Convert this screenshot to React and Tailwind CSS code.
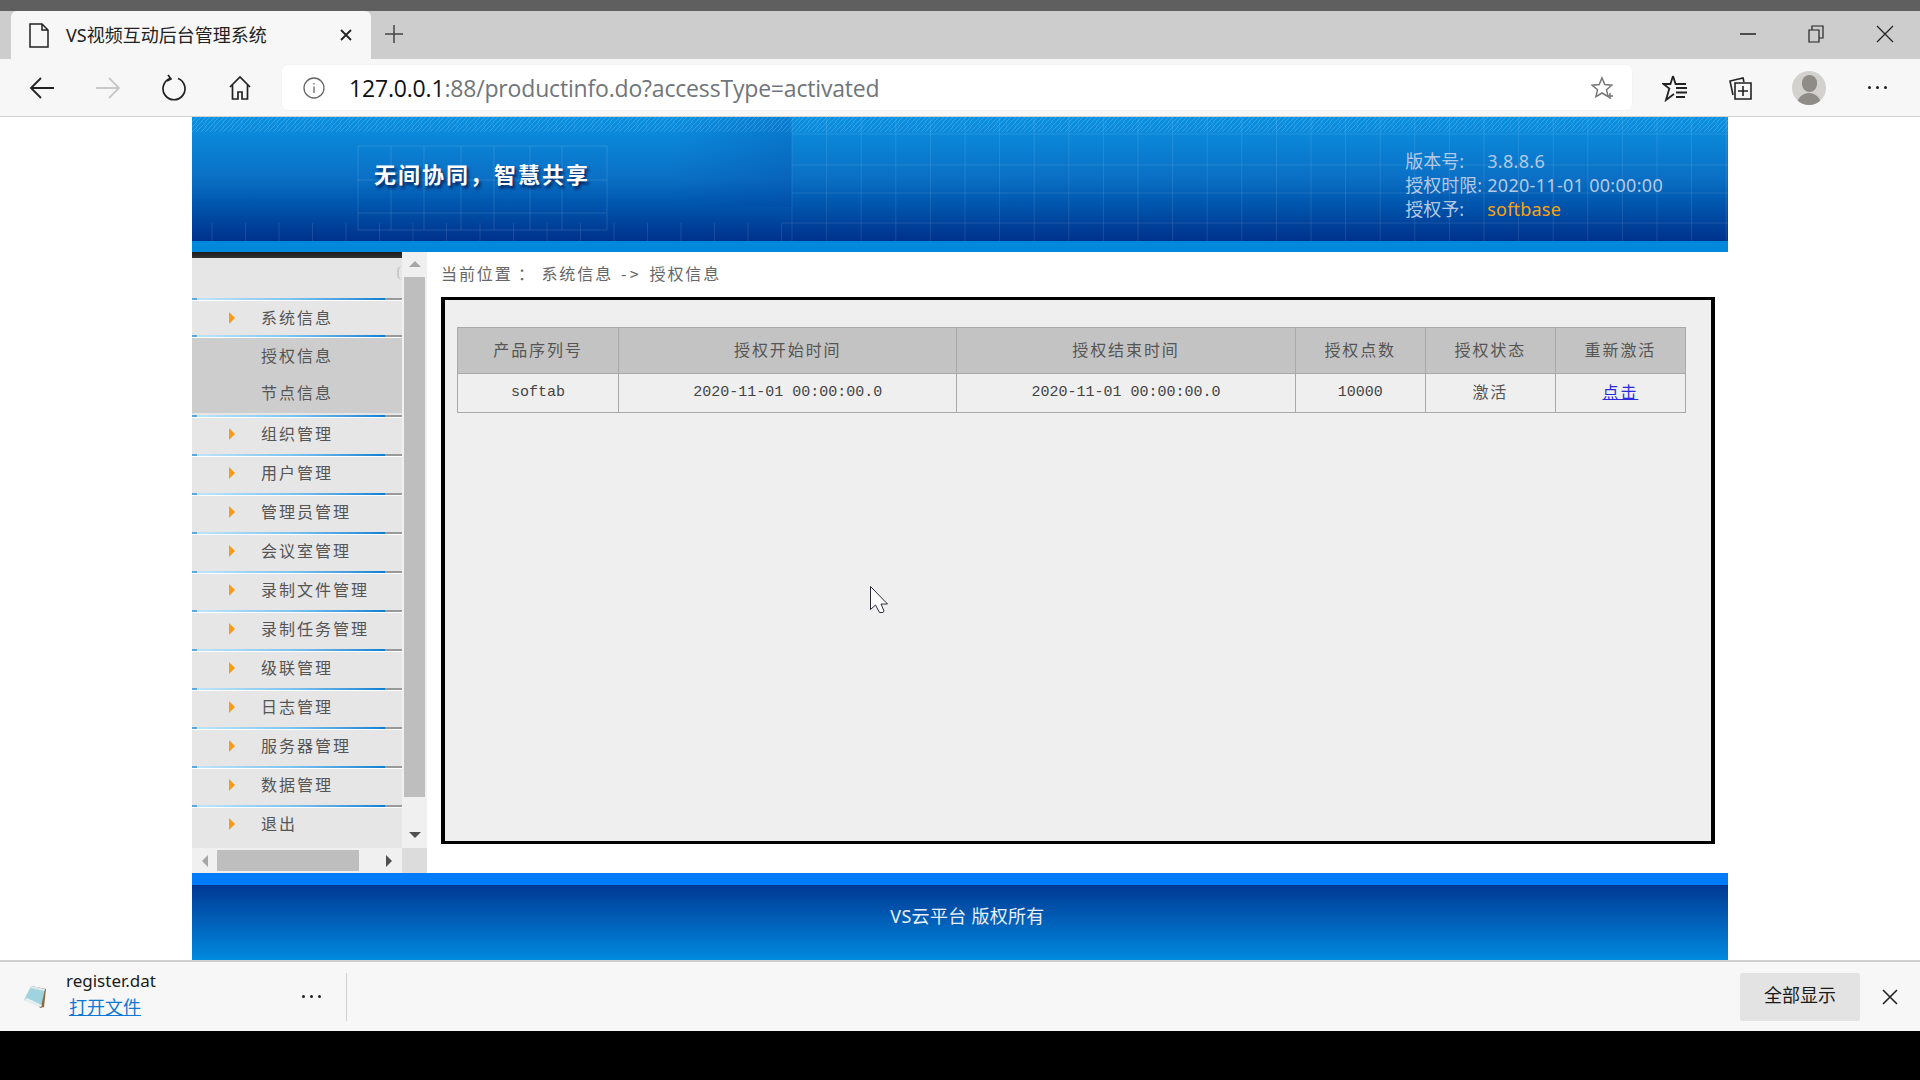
import React from 'react';

const serif = "font-['Noto_Sans_CJK_SC','Noto_Sans',sans-serif]";

const menuRows = ['组织管理', '用户管理', '管理员管理', '会议室管理', '录制文件管理', '录制任务管理', '级联管理', '日志管理', '服务器管理', '数据管理', '退出'];

const Svg = ({ w = 24, h = 24, stroke = '#222', width = 1.5, children }) => (
  <svg width={w} height={h} viewBox={`0 0 ${w} ${h}`} fill="none" stroke={stroke} strokeWidth={width}>
    {children}
  </svg>
);

// browser top strip with tab and window buttons
const TabStrip = () => (
  <div className="h-[48px] bg-[#cdcdcd] flex items-stretch pl-[11px]">
    <div className="w-[360px] bg-[#f7f7f7] rounded-t-[6px] flex items-center pl-[18px]">
      <Svg w={20} h={25}>
        <path d="M1 1h12l6 6v17H1z M13 1v6h6" />
      </Svg>
      <span className="ml-[17px] text-[18px] text-[#222] whitespace-nowrap font-['Noto_Sans','Noto_Sans_CJK_SC',sans-serif]">VS视频互动后台管理系统</span>
      <div className="ml-auto mr-[18px]">
        <Svg w={14} h={14} width={1.8}>
          <path d="M2 2l10 10M12 2L2 12" />
        </Svg>
      </div>
    </div>
    <div className="ml-[13px] flex items-center pb-[2px]">
      <Svg w={20} h={20} stroke="#444">
        <path d="M10 1v18M1 10h18" />
      </Svg>
    </div>
    <div className="ml-auto flex pb-[2px]">
      <div className="w-[68px] flex items-center justify-center">
        <Svg w={16} h={4}>
          <path d="M0 2h16" />
        </Svg>
      </div>
      <div className="w-[68px] flex items-center justify-center">
        <Svg w={16} h={18} width={1.2}>
          <path d="M1 5h10v12H1z M4 5V1h11v12h-4" />
        </Svg>
      </div>
      <div className="w-[70px] flex items-center justify-center">
        <Svg w={18} h={18} width={1.2}>
          <path d="M1 1l16 16M17 1L1 17" />
        </Svg>
      </div>
    </div>
  </div>
);

const ToolButton = ({ children }) => (
  <div className="w-[66px] h-full flex items-center justify-center shrink-0">{children}</div>
);

const Toolbar = () => (
  <div className="h-[58px] bg-[#f7f7f7] border-b border-[#d2d2d2] flex items-center pl-[9px]">
    <ToolButton>
      <Svg w={26} h={24} width={1.8}>
        <path d="M25 12H2M12 2L2 12l10 10" />
      </Svg>
    </ToolButton>
    <ToolButton>
      <Svg w={26} h={24} stroke="#c8c8c8" width={1.8}>
        <path d="M1 12h23M14 2l10 10-10 10" />
      </Svg>
    </ToolButton>
    <ToolButton>
      <Svg w={26} h={28} stroke="#222" width={1.7}>
        <path d="M9 4.500a11 11 0 1 0 8 0M7 1l3 4-4 2" />
      </Svg>
    </ToolButton>
    <ToolButton>
      <Svg w={24} h={26} width={1.7}>
        <path d="M2 12L12 2l10 10M4.500 10v14h5.500v-7h4v7h5.500V10" />
      </Svg>
    </ToolButton>
    <div className="w-[1350px] ml-[9px] h-[45px] bg-white rounded-[6px] flex items-center shrink-0 shadow-[0_0_2px_rgba(0,0,0,0.06)]">
      <div className="ml-[21px]">
        <Svg w={22} h={22} stroke="#666" width={1.3}>
          <circle cx="11" cy="11" r="10" />
          <path d="M11 9.500V16M11 6v1.500" />
        </Svg>
      </div>
      <div className="ml-[24px] pt-[1px] text-[23px] tracking-[-0.18px] text-[#70757a] whitespace-nowrap font-['Open_Sans','Noto_Sans',sans-serif]">
        <span className="text-[#111]">127.0.0.1</span>:88/productinfo.do?accessType=activated
      </div>
      <div className="ml-auto mr-[17px]">
        <Svg w={24} h={24} stroke="#777" width={1.5}>
          <path d="M11 2l2.800 6.600 7 .6-5.300 4.600 1.600 6.900L11 17l-6.100 3.700 1.600-6.900L1.200 9.200l7-.6z" />
          <path d="M19 17v6M16 20h6" />
        </Svg>
      </div>
    </div>
    <div className="w-[10px] shrink-0" />
    <ToolButton>
      <Svg w={26} h={28} width={1.8}>
        <path d="M11 2l2.600 8H24M11 2L8.400 10H1.500l5.800 4.600L4 26l8-6" />
        <path d="M14 14h11M14 18.500h11M14 23h9" />
      </Svg>
    </ToolButton>
    <ToolButton>
      <Svg w={26} h={26} width={1.6}>
        <path d="M5 20L2 6l13-3 1 4" />
        <path d="M7 8h16v16H7z M15 11v10M10 16h10" />
      </Svg>
    </ToolButton>
    <div className="w-[70px] h-full flex items-center justify-center shrink-0">
      <div className="w-[34px] h-[34px] rounded-full bg-[#d2d1cd] flex flex-col items-center justify-end overflow-hidden">
        <div className="w-[15px] h-[17px] rounded-full bg-[#8f8b87] mb-[1px]" />
        <div className="w-[24px] h-[12px] rounded-t-full bg-[#8f8b87]" />
      </div>
    </div>
    <div className="w-[67px] h-full flex items-center justify-center shrink-0">
      <div className="flex gap-[5px]">
        <div className="w-[3px] h-[3px] rounded-full bg-[#222]" />
        <div className="w-[3px] h-[3px] rounded-full bg-[#222]" />
        <div className="w-[3px] h-[3px] rounded-full bg-[#222]" />
      </div>
    </div>
  </div>
);

// banner artwork: dotted top band and faint grid lines
const BannerArt = () => {
  const rightV = [];
  for (let x = 600; x < 1536; x += 34.6) rightV.push(x);
  const bottomV = [];
  for (let x = 20; x < 600; x += 33.5) bottomV.push(x);
  const boxV = [166, 199, 232, 269, 302, 338, 370, 415];
  return (
    <svg className="absolute left-0 top-0" width="1536" height="124" viewBox="0 0 1536 124">
      <defs>
        <pattern id="dots" width="9" height="5" patternUnits="userSpaceOnUse">
          <path d="M0 5L5 0M4 5L9 0" stroke="#ffffff" strokeOpacity="0.16" strokeWidth="1" />
        </pattern>
        <linearGradient id="dark" x1="0" y1="0" x2="1" y2="0">
          <stop offset="0" stopColor="#003a9a" stopOpacity="0" />
          <stop offset="1" stopColor="#003a9a" stopOpacity="0.22" />
        </linearGradient>
      </defs>
      <rect x="480" y="0" width="120" height="90" fill="url(#dark)" />
      <rect x="0" y="0" width="1536" height="15" fill="url(#dots)" />
      <g stroke="#ffffff" strokeOpacity="0.1">
        {rightV.map((x) => (
          <path key={x} d={`M${x} 0V124`} />
        ))}
        <path d="M600 17H1536M600 48H1536M600 76H1536M590 106H1536" />
      </g>
      <g stroke="#ffffff" strokeOpacity="0.1">
        {bottomV.map((x) => (
          <path key={x} d={`M${x} 106V124`} />
        ))}
      </g>
      <g stroke="#ffffff" strokeOpacity="0.12">
        {boxV.map((x) => (
          <path key={x} d={`M${x} 29V113`} />
        ))}
        <path d="M166 29H415M166 63H415M166 96H415M166 113H415" />
      </g>
    </svg>
  );
};

const Banner = () => (
  <div className="h-[135px] shrink-0 flex flex-col">
    <div className="relative h-[124px] bg-gradient-to-b from-[#0c92e2] via-[#0a6fc4] to-[#00318c]">
      <BannerArt />
      <div className="relative flex h-full">
        <div className="ml-[182px] mt-[41px] h-[30px] text-[22px] leading-[30px] font-bold tracking-[2px] text-white whitespace-nowrap font-['Noto_Sans_CJK_SC',sans-serif] [text-shadow:2px_3px_3px_rgba(0,20,70,0.8)]">
          无间协同，智慧共享
        </div>
        <div className="ml-auto mr-[65px] mt-[32px] text-[18px] leading-[24px] text-[#b3c9e6] font-['Noto_Sans','Noto_Sans_CJK_SC',sans-serif]">
          <div className="flex">
            <span className="w-[82px]">版本号:</span>
            <span className="tracking-[0.3px]">3.8.8.6</span>
          </div>
          <div className="flex">
            <span className="w-[82px]">授权时限:</span>
            <span className="tracking-[0.3px]">2020-11-01 00:00:00</span>
          </div>
          <div className="flex">
            <span className="w-[82px]">授权予:</span>
            <span className="tracking-[0.2px] text-[#fba30c]">softbase</span>
          </div>
        </div>
      </div>
    </div>
    <div className="h-[11px] bg-[#0088da]" />
  </div>
);

const Divider = () => (
  <div className="shrink-0">
    <div className="h-[2px] flex">
      <div className="w-[5px] bg-[#5aa9de]" />
      <div className="w-[188px] bg-gradient-to-r from-[#bfe4fb] via-[#7cc4ef] to-[#0580d2]" />
      <div className="flex-1 bg-[#999999]" />
    </div>
    <div className="h-[1px] bg-white" />
  </div>
);

const MenuText = ({ children, arrow }) => (
  <div className="h-full flex items-center text-[16px] tracking-[2px] text-[#555] pl-[37px] whitespace-nowrap">
    <div className="w-[32px] shrink-0">
      {arrow && <div className="w-0 h-0 border-y-[6.5px] border-y-transparent border-l-[6px] border-l-[#ff9a0a]" />}
    </div>
    <span className="pb-[3px]">{children}</span>
  </div>
);

const Sidebar = () => (
  <div className={`w-[235px] shrink-0 flex flex-col ${serif}`}>
    <div className="flex-1 flex min-h-0">
      <div className="w-[210px] bg-[#e6e6e6] flex flex-col">
        <div className="h-[6px] shrink-0 bg-gradient-to-b from-[#1c1c1c] to-[#333333]" />
        <div className="h-[40px] shrink-0 flex justify-end pt-[8px]">
          <div className="w-[5px] h-[14px] border-l-2 border-[#c8c8c8] rounded-l-full" />
        </div>
        <Divider />
        <div className="h-[34px] shrink-0">
          <MenuText arrow>系统信息</MenuText>
        </div>
        <Divider />
        <div className="h-[75px] shrink-0 bg-[#cdcdcd] flex flex-col pb-[1px]">
          <div className="flex-1">
            <MenuText>授权信息</MenuText>
          </div>
          <div className="flex-1">
            <MenuText>节点信息</MenuText>
          </div>
        </div>
        <div className="h-[2px] shrink-0" />
        {menuRows.map((label, i) => (
          <React.Fragment key={label}>
            <Divider />
            <div className={`shrink-0 h-[36px] pb-[4px] ${i === menuRows.length - 1 ? 'mb-[4px]' : ''}`}>
              <MenuText arrow>{label}</MenuText>
            </div>
          </React.Fragment>
        ))}
      </div>
      {/* vertical scrollbar */}
      <div className="w-[25px] bg-[#f0f0f0] flex flex-col items-center">
        <div className="h-[25px] flex items-center justify-center pb-[2px]">
          <div className="w-0 h-0 border-x-[6px] border-x-transparent border-b-[6px] border-b-[#a6a6a6]" />
        </div>
        <div className="w-[21px] h-[520px] bg-[#bebebe]" />
        <div className="flex-1 flex items-center justify-center pt-[25px]">
          <div className="w-0 h-0 border-x-[6px] border-x-transparent border-t-[6px] border-t-[#505050]" />
        </div>
      </div>
    </div>
    {/* horizontal scrollbar */}
    <div className="h-[25px] shrink-0 flex">
      <div className="w-[210px] bg-[#f0f0f0] flex items-center">
        <div className="w-[25px] flex justify-center">
          <div className="w-0 h-0 border-y-[6px] border-y-transparent border-r-[6px] border-r-[#a6a6a6]" />
        </div>
        <div className="w-[142px] h-[21px] bg-[#bebebe]" />
        <div className="flex-1 flex justify-center pl-[17px]">
          <div className="w-0 h-0 border-y-[6px] border-y-transparent border-l-[6px] border-l-[#505050]" />
        </div>
      </div>
      <div className="flex-1 bg-[#dcdcdc]" />
    </div>
  </div>
);

const th = 'border border-[#a9a9a9] font-normal pb-[4px]';
const td = 'border border-[#a9a9a9] pb-[5px]';
const mono = "border border-[#a9a9a9] font-['Liberation_Mono',monospace] text-[15px] tracking-normal text-[#444]";

const Main = () => (
  <div className={`flex-1 min-w-0 bg-white pl-[14px] pr-[13px] ${serif}`}>
    <div className="h-[45px] flex items-center pb-[4px] text-[16px] tracking-[1.9px] text-[#666] whitespace-pre">
      当前位置 ： 系统信息<span className="mx-[8px] tracking-[3px]">-&gt;</span>授权信息
    </div>
    <div className="h-[547px] bg-[#efefef] border-y-[3px] border-x-4 border-black pl-[12px] pt-[27px]">
      <table className="w-[1229px] table-fixed border-collapse text-center text-[16px] tracking-[1.9px] text-[#555]">
        <colgroup>
          <col className="w-[161px]" />
          <col className="w-[338px]" />
          <col className="w-[338px]" />
          <col className="w-[130px]" />
          <col className="w-[130px]" />
          <col className="w-[130px]" />
        </colgroup>
        <thead>
          <tr className="h-[46px] bg-[#c3c3c3]">
            <th className={th}>产品序列号</th>
            <th className={th}>授权开始时间</th>
            <th className={th}>授权结束时间</th>
            <th className={th}>授权点数</th>
            <th className={th}>授权状态</th>
            <th className={th}>重新激活</th>
          </tr>
        </thead>
        <tbody>
          <tr className="h-[39px]">
            <td className={mono}>softab</td>
            <td className={mono}>2020-11-01 00:00:00.0</td>
            <td className={mono}>2020-11-01 00:00:00.0</td>
            <td className={mono}>10000</td>
            <td className={td}>激活</td>
            <td className={td}>
              <a href="#" className="text-[#2a2ae0] underline">点击</a>
            </td>
          </tr>
        </tbody>
      </table>
    </div>
  </div>
);

const Footer = () => (
  <div className="h-[87px] shrink-0 flex flex-col">
    <div className="h-[12px] bg-[#007bfa]" />
    <div className="flex-1 bg-gradient-to-b from-[#003894] to-[#008ade] flex items-center justify-center pl-[15px] pb-[13px] text-[18px] tracking-[0.3px] text-[#e8eff8] font-['Noto_Sans','Noto_Sans_CJK_SC',sans-serif]">
      VS云平台 版权所有
    </div>
  </div>
);

const DownloadBar = () => (
  <div className="h-[71px] shrink-0 bg-[#f7f7f7] border-t-2 border-[#d0d0d0] flex items-center font-['Noto_Sans','Noto_Sans_CJK_SC',sans-serif]">
    <div className="ml-[23px] w-[25px] shrink-0">
      <svg width="25" height="24" viewBox="0 0 25 24">
        <path d="M8 1l15 3-2 18-4 1z" fill="#8a6a3c" />
        <path d="M8 1l14 3-4 18L1 15z" fill="#9fd3e0" />
        <path d="M1 15l17 7 1-2-15-7z" fill="#e8eef0" />
        <path d="M8 1l14 3-1 2L7 3z" fill="#dfe9ec" />
      </svg>
    </div>
    <div className="ml-[18px] w-[200px] shrink-0 text-[17px] leading-[27px] pb-[5px]">
      <div className="text-[#1a1a1a]">register.dat</div>
      <a href="#" className="ml-[3px] text-[18px] text-[#0a78d7] underline">打开文件</a>
    </div>
    <div className="ml-[36px] flex gap-[5px]">
      <div className="w-[3px] h-[3px] rounded-full bg-[#222]" />
      <div className="w-[3px] h-[3px] rounded-full bg-[#222]" />
      <div className="w-[3px] h-[3px] rounded-full bg-[#222]" />
    </div>
    <div className="ml-[25px] w-px h-[48px] bg-[#cfcfcf]" />
    <div className="ml-auto w-[120px] h-[48px] bg-[#e3e3e3] rounded-[2px] flex items-center justify-center pb-[2px] text-[18px] text-[#1a1a1a]">全部显示</div>
    <div className="w-[60px] flex items-center justify-center">
      <Svg w={16} h={16} width={1.6}>
        <path d="M1 1l14 14M15 1L1 15" />
      </Svg>
    </div>
  </div>
);

const App = () => {
  return (
    <div className="relative w-[1920px] h-[1080px] overflow-hidden bg-black flex flex-col">
      <div className="h-[11px] bg-[#5f5f5f] shrink-0" />
      <TabStrip />
      <Toolbar />
      <div className="h-[843px] shrink-0 bg-white px-[192px]">
        <div className="h-full flex flex-col">
          <Banner />
          <div className="flex-1 flex min-h-0">
            <Sidebar />
            <Main />
          </div>
          <Footer />
        </div>
      </div>
      <DownloadBar />

      {/* mouse pointer */}
      <svg className="absolute left-[870px] top-[586px]" width="20" height="28" viewBox="0 0 20 28">
        <path d="M0.500 0.500V23.500L5.500 19L9.500 26.500H13L14 25L11 18H17.500z" fill="#fff" stroke="#2a2a3a" strokeWidth="1" />
      </svg>
    </div>
  );
};

export default App;
